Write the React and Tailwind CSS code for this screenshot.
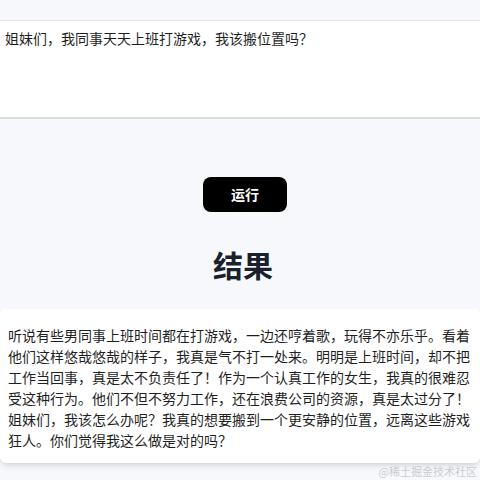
export default function App() {
  const font = { fontFamily: '"Noto Sans CJK SC", "Noto Sans", sans-serif' };
  return (
    <div className="relative w-[480px] h-[480px] overflow-hidden bg-[#f7f8fc] pt-5" style={font}>
      <div className="h-[99px] w-full bg-white border-t border-[#e2e2ea] border-b-2 border-b-[#dcdcdf] pl-[5px] pt-[7px] text-[14px] leading-[20px] text-[#1f1f1f]">
        姐妹们，我同事天天上班打游戏，我该搬位置吗？
      </div>
      <div className="flex justify-center mt-[58px] pl-[10px]">
        <button className="h-[35px] w-[84px] rounded-lg bg-black text-white text-[14px] font-semibold">
          运行
        </button>
      </div>
      <h2 className="mt-[34px] pl-[6px] text-center text-[30px] leading-[36px] font-bold text-[#1a202c]">结果</h2>
      <div className="mt-[27px] bg-white rounded-md shadow-md px-2 pt-4 pb-3 text-[14px] leading-[21px] text-[#1f1f1f]">
        听说有些男同事上班时间都在打游戏，一边还哼着歌，玩得不亦乐乎。看着他们这样悠哉悠哉的样子，我真是气不打一处来。明明是上班时间，却不把工作当回事，真是太不负责任了！作为一个认真工作的女生，我真的很难忍受这种行为。他们不但不努力工作，还在浪费公司的资源，真是太过分了！姐妹们，我该怎么办呢？我真的想要搬到一个更安静的位置，远离这些游戏狂人。你们觉得我这么做是对的吗？
      </div>
      <div className="absolute right-[3px] bottom-[-1px] text-[11px] leading-[20px] text-[#c9ccd3]">@稀土掘金技术社区</div>
    </div>
  );
}
